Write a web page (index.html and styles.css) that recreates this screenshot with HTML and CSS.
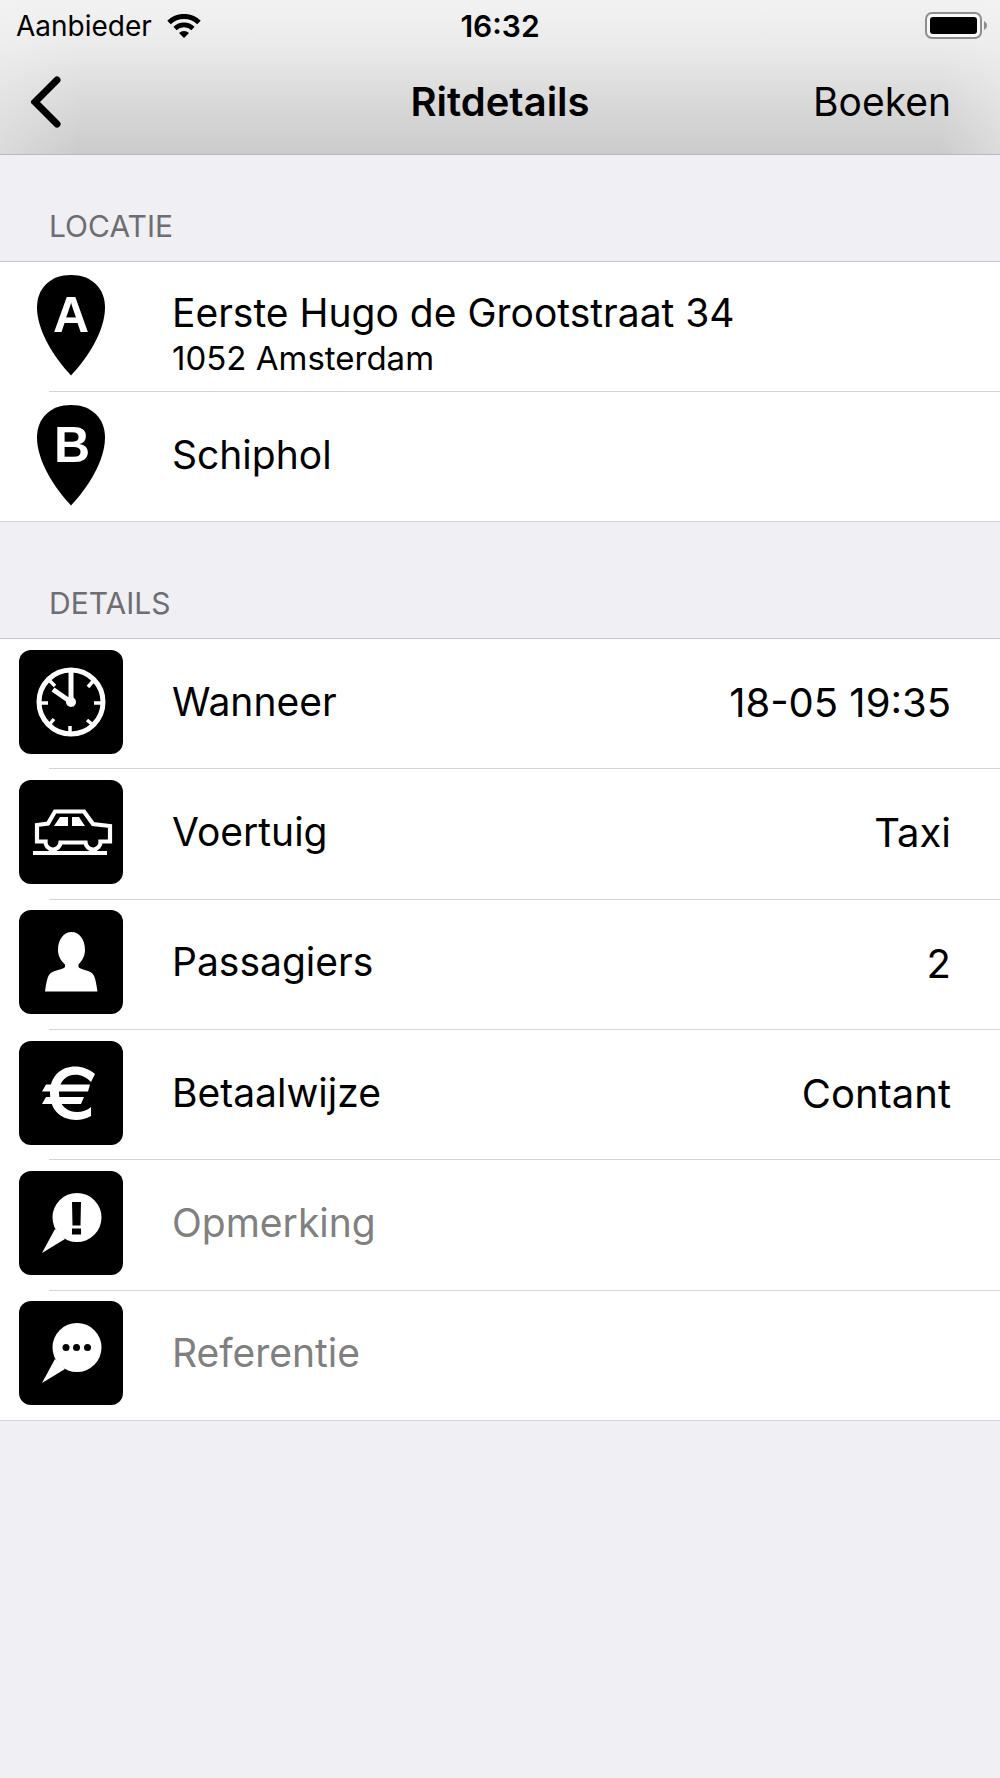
FILE: index.html
```html
<!DOCTYPE html>
<html lang="nl">
<head>
<meta charset="utf-8">
<meta name="viewport" content="width=device-width, initial-scale=1">
<title>Ritdetails</title>
<link rel="stylesheet" href="styles.css">
</head>
<body>
<header class="topbar">
  <div class="status">
    <div class="carrier">
      <span>Aanbieder</span>
      <svg class="wifi" viewBox="0 0 34 24" aria-hidden="true">
        <path d="M2 8.500A21.500 21.500 0 0 1 32 8.500" fill="none" stroke="#000" stroke-width="5"/>
        <path d="M8 14.500A13 13 0 0 1 26 14.500" fill="none" stroke="#000" stroke-width="4.600"/>
        <path d="M12 19A7.500 7.500 0 0 1 22 19L17 24Z"/>
      </svg>
    </div>
    <time class="clock">16:32</time>
    <svg class="battery" viewBox="0 0 64 28" aria-hidden="true">
      <rect x="2" y="1" width="55" height="25" rx="6" fill="#f8f8f8" stroke="#8e8e8e" stroke-width="2"/>
      <rect x="6" y="5" width="47" height="17" rx="3"/>
      <path d="M60 9C64 11 64 16 60 18Z" fill="#8e8e8e"/>
    </svg>
  </div>
  <nav class="nav">
    <button class="back" type="button" aria-label="Terug">
      <svg viewBox="0 0 30 52" aria-hidden="true"><path d="M26 4L4 26L26 48" fill="none" stroke="#000" stroke-width="7" stroke-linecap="round"/></svg>
    </button>
    <h1 class="title">Ritdetails</h1>
    <button class="book" type="button">Boeken</button>
  </nav>
</header>
<main>
  <section>
    <h2 class="heading">LOCATIE</h2>
    <ul class="list">
      <li class="row">
        <svg class="icon" viewBox="0 0 104 104" role="img" aria-label="A">
          <path d="M52 2C72.500 2 86 15 86 34.500C86 58 68.500 85 52 102.500C35.500 85 18 58 18 34.500C18 15 31.500 2 52 2Z"/>
          <text class="pin-letter" x="52" y="59">A</text>
        </svg>
        <div class="address"><span class="label">Eerste Hugo de Grootstraat 34</span><span class="city">1052 Amsterdam</span></div>
      </li>
      <li class="row">
        <svg class="icon" viewBox="0 0 104 104" role="img" aria-label="B">
          <path d="M52 2C72.500 2 86 15 86 34.500C86 58 68.500 85 52 102.500C35.500 85 18 58 18 34.500C18 15 31.500 2 52 2Z"/>
          <text class="pin-letter" x="53" y="59">B</text>
        </svg>
        <span class="label">Schiphol</span>
      </li>
    </ul>
  </section>
  <section>
    <h2 class="heading heading-next">DETAILS</h2>
    <ul class="list list-details">
      <li class="row">
        <svg class="icon tile" viewBox="0 0 104 104" aria-hidden="true">
          <g fill="none" stroke="#fff">
            <circle cx="52" cy="52" r="32" stroke-width="5"/>
            <path d="M52 20V52L34 39.500" stroke-width="5"/>
            <path d="M20 53H29M84 53H75M51 84V76M30 30L36 36M75 30L69 37M30 75L35 69M74 75L68 70" stroke-width="3.500"/>
          </g>
          <circle cx="52" cy="52" r="5" fill="#fff"/>
        </svg>
        <span class="label">Wanneer</span><span class="value">18-05 19:35</span>
      </li>
      <li class="row">
        <svg class="icon tile" viewBox="0 0 104 104" aria-hidden="true">
          <path d="M18 61.500V45L29 43.500L36 31.500H65L74 44L91 46V61.500H81.500A7.500 7.500 0 0 1 66.500 62.500H41.500A7.500 7.500 0 0 1 26.500 61.500Z" fill="none" stroke="#fff" stroke-width="4.200"/>
          <path d="M35 46L41 37H49V46ZM53 46V37H60L66 46Z" fill="#fff"/>
          <path d="M14 73H88" stroke="#fff" stroke-width="4.200"/>
        </svg>
        <span class="label">Voertuig</span><span class="value">Taxi</span>
      </li>
      <li class="row">
        <svg class="icon tile" viewBox="0 0 104 104" aria-hidden="true">
          <path d="M52.500 22C60 22 66 29 66 40C66 46 63 51 59.500 54.500V57C61 60 72 60 74.500 65C76.500 68 77.500 75 78.500 81.500H26C27 75 28 68 30 65C33 60 44 60 46 57V54.500C42 51 39 46 39 40C39 29 45 22 52.500 22Z" fill="#fff"/>
        </svg>
        <span class="label">Passagiers</span><span class="value">2</span>
      </li>
      <li class="row">
        <svg class="icon tile" viewBox="0 0 104 104" aria-hidden="true">
          <path d="M76 33L72 41C62 29 40 31 40 52C40 73 62 75 72 66V75C56 84 31 78 31 52C31 24 60 19 76 33Z" fill="#fff"/>
          <path d="M27 43.500H71L69 50.500H23ZM27 56H65L62 63H23Z" fill="#fff"/>
        </svg>
        <span class="label">Betaalwijze</span><span class="value">Contant</span>
      </li>
      <li class="row">
        <svg class="icon tile" viewBox="0 0 104 104" aria-hidden="true">
          <path d="M36 58L23 82L46 68Z" fill="#fff"/><circle cx="58" cy="46.500" r="24.500" fill="#fff"/>
          <path d="M53 31H62L61.500 54.500H53.500ZM53 57.500H62V63.500H53Z"/>
        </svg>
        <input class="field" type="text" placeholder="Opmerking" aria-label="Opmerking">
      </li>
      <li class="row">
        <svg class="icon tile" viewBox="0 0 104 104" aria-hidden="true">
          <path d="M36 58L23 82L46 68Z" fill="#fff"/><circle cx="58" cy="46.500" r="24.500" fill="#fff"/>
          <circle cx="47" cy="46.500" r="3.500"/><circle cx="57.500" cy="46.500" r="3.500"/><circle cx="68.500" cy="46.500" r="3.500"/>
        </svg>
        <input class="field" type="text" placeholder="Referentie" aria-label="Referentie">
      </li>
    </ul>
  </section>
</main>
</body>
</html>
```
FILE: styles.css
```css
* { box-sizing: border-box; }

body {
  margin: 0;
  min-height: 100vh;
  background: #efeff4;
  color: #000;
  font-family: Inter, "Liberation Sans", sans-serif;
  font-size: 39px;
  line-height: 48px;
}

button {
  padding: 0;
  border: 0;
  background: none;
  color: inherit;
  font: inherit;
}

.topbar {
  border-bottom: 1px solid #b9b9bb;
  background:
    linear-gradient(90deg, rgba(242, 242, 244, 0.4), transparent 8%, transparent 94%, rgba(242, 242, 244, 0.4)),
    linear-gradient(#f2f2f2, #ebebeb 28%, #d8d8d8 68%, #cbcbcb);
}

.status {
  display: grid;
  grid-template-columns: 1fr auto 1fr;
  align-items: center;
  height: 50px;
  padding: 2px 12px 0;
  font-size: 28px;
  line-height: 32px;
}

.carrier { display: flex; align-items: center; gap: 15px; padding-left: 4px; }
.wifi { width: 34px; height: 24px; }
.clock { font-size: 30px; font-weight: 600; }
.battery { width: 64px; height: 28px; justify-self: end; }

.nav {
  display: grid;
  grid-template-columns: 1fr auto 1fr;
  align-items: center;
  height: 104px;
  padding: 0 31px;
}

.back { justify-self: start; height: 52px; }
.back svg { display: block; width: 30px; height: 52px; }
.title { margin: 0; font-size: 40px; font-weight: 600; }
.book { justify-self: end; margin-right: 18px; }

.heading {
  margin: 0;
  padding: 51px 49px 15px;
  color: #6d6d72;
  font-size: 30px;
  font-weight: 400;
  line-height: 40px;
}

.heading-next { padding-top: 61px; }

.list {
  display: grid;
  grid-auto-rows: 1fr;
  margin: 0;
  padding: 0;
  border-top: 1px solid #c8c7cc;
  background: #fff;
  list-style: none;
}

.list-details { min-height: 783px; }

.row {
  display: flex;
  align-items: center;
  min-height: 130px;
  padding: 0 49px 5px 19px;
  background: linear-gradient(#d4d4d8, #d4d4d8) 49px 100% / 100% 1px no-repeat;
}

.row:last-child { background-position: 0 100%; }
.icon { flex: none; width: 104px; height: 104px; margin-right: 49px; }
.tile { border-radius: 12px; background: #000; }

.pin-letter {
  fill: #fff;
  font-family: "Liberation Sans", sans-serif;
  font-size: 50px;
  font-weight: 700;
  text-anchor: middle;
}

.address { display: flex; flex-direction: column; padding-top: 18px; }
.city { font-size: 33px; line-height: 42px; }
.value { margin-left: auto; padding-top: 3px; font-size: 40px; }

.field {
  flex: 1;
  min-width: 0;
  padding: 0;
  border: 0;
  outline: 0;
  background: none;
  font: inherit;
}

.field::placeholder { color: #808080; opacity: 1; }
```
